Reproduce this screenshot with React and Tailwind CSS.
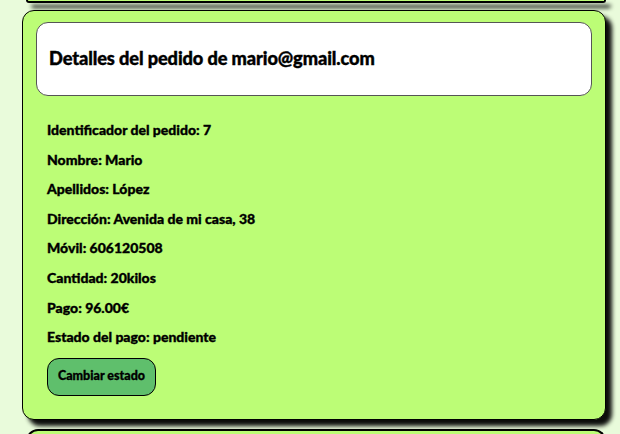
export default function App() {
  const items = [
    ['Identificador del pedido', '7'],
    ['Nombre', 'Mario'],
    ['Apellidos', 'López'],
    ['Dirección', 'Avenida de mi casa, 38'],
    ['Móvil', '606120508'],
    ['Cantidad', '20kilos'],
    ['Pago', '96.00€'],
    ['Estado del pago', 'pendiente'],
  ];

  return (
    <div
      className="w-[620px] h-[434px] overflow-hidden bg-[#e9fbdb] flex flex-col"
      style={{ fontFamily: 'Lato, "Noto Sans", sans-serif' }}
    >
      {/* previous card, only its bottom edge is visible */}
      <div className="ml-[26px] w-[580px] h-[3px] shrink-0 bg-[#bcfd76] border-b-2 border-x-2 border-black rounded-b-[12px] shadow-[5px_5px_4px_rgba(0,0,0,0.95)]" />

      <div className="mt-[7px] ml-[22px] w-[584px] shrink-0 bg-[#bcfd76] border border-black rounded-[12px] shadow-[6px_6px_4px_rgba(0,0,0,0.95)] px-[13px] pt-[11px] pb-[23px]">
        <div className="bg-white border border-[#555] rounded-[12px] h-[74px] flex items-center px-[12px]">
          <h1 className="text-[18.2px] font-black text-black [-webkit-text-stroke:0.4px_black] tracking-[-0.1px]">
            Detalles del pedido de mario@gmail.com
          </h1>
        </div>

        <div className="pl-[11px] pt-[24px] flex flex-col gap-[10px]">
          {items.map(([k, v]) => (
            <p key={k} className="text-[14px] leading-[19.6px] font-black text-black [-webkit-text-stroke:0.35px_black]">
              {k}: {v}
            </p>
          ))}
        </div>

        <div className="pl-[11px] pt-[11px]">
          <button className="w-[109px] h-[38px] bg-[#5fbf6c] border border-black rounded-[12px] text-[12.5px] font-black text-black [-webkit-text-stroke:0.3px_black]">
            Cambiar estado
          </button>
        </div>
      </div>

      {/* next card, only its top edge is visible */}
      <div className="mt-[9px] ml-[26px] w-[580px] h-[20px] shrink-0 bg-[#bcfd76] border-t-2 border-x-2 border-black rounded-t-[12px]" />
    </div>
  );
}
